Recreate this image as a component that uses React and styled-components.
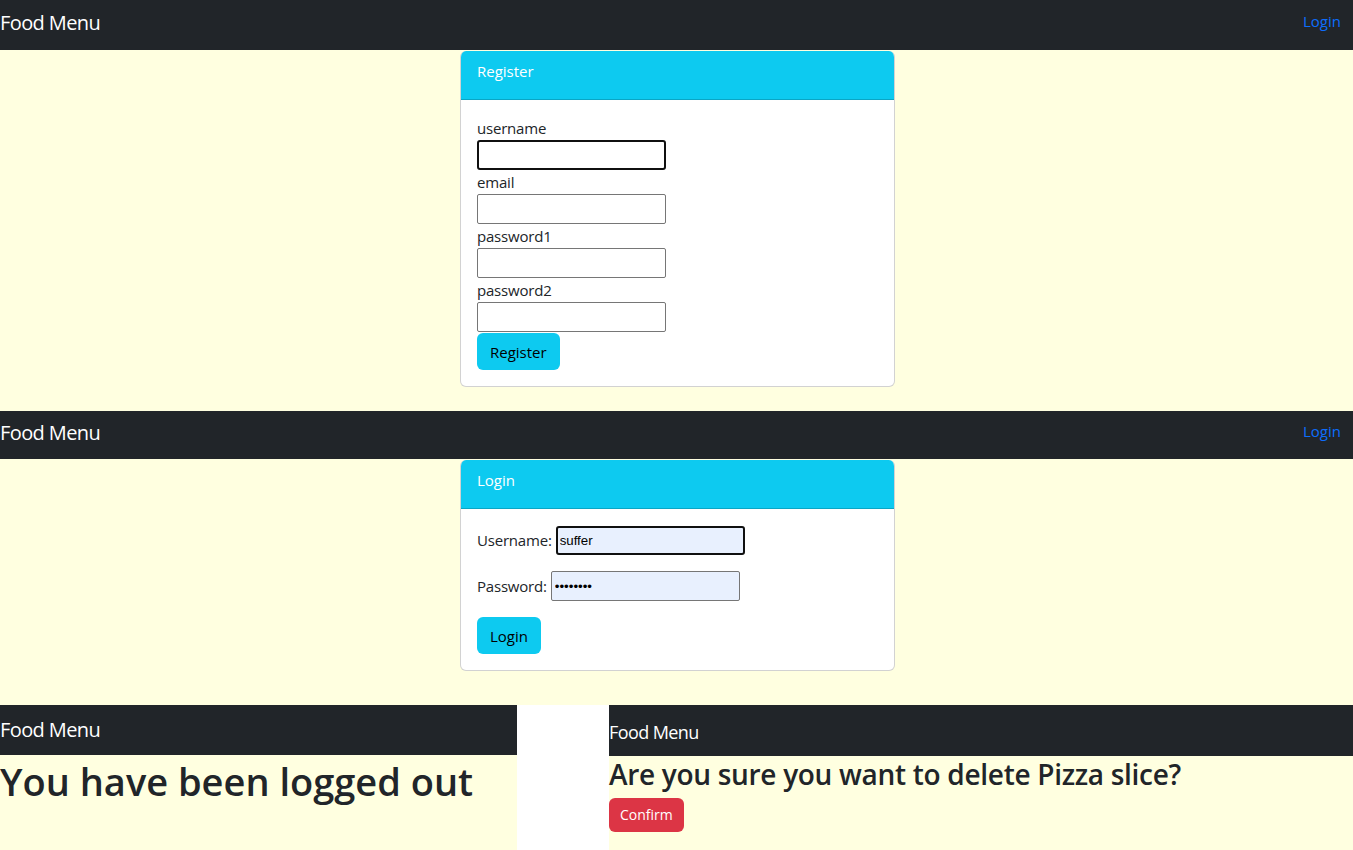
import React from "react";
import styled, { createGlobalStyle } from "styled-components";

const GlobalStyle = createGlobalStyle`
  * { box-sizing: border-box; }
  body {
    margin: 0;
    background: #ffffe0;
    font-family: "Open Sans", "Noto Sans", sans-serif;
    color: #212529;
    font-size: 16px;
  }
`;

const Page = styled.div`
  display: flex;
  flex-direction: column;
  width: 1353px;
  height: 850px;
  overflow: hidden;
`;

const Screen = styled.section`
  display: flex;
  flex-direction: column;
  height: ${(p) => p.h}px;
`;

const Navbar = styled.nav`
  display: flex;
  align-items: center;
  justify-content: space-between;
  height: ${(p) => p.h || 50}px;
  background: #212529;
  padding: 0 12px ${(p) => p.lift || 0}px 0;
  flex-shrink: 0;
`;

const Brand = styled.a`
  color: #fff;
  font-size: ${(p) => p.size || 20}px;
  letter-spacing: -0.6px;
  text-decoration: none;
  margin-top: ${(p) => p.offset || 0}px;
`;

const NavLink = styled.a`
  color: #0d6efd;
  font-size: 15px;
  text-decoration: none;
  margin-bottom: 3px;
`;

const CardWrap = styled.div`
  display: flex;
  justify-content: center;
  padding-left: 2px;
`;

const Card = styled.div`
  width: 435px;
  background: #fff;
  border: 1px solid rgba(0, 0, 0, 0.175);
  border-top: none;
  border-radius: 6px;
  overflow: hidden;
  margin-top: 1px;
`;

const CardHeader = styled.div`
  height: 49px;
  display: flex;
  align-items: center;
  padding: 0 16px 8px;
  background: #0dcaf0;
  color: #fff;
  font-size: 15px;
  border-bottom: 1px solid rgba(0, 0, 0, 0.175);
`;

const CardBody = styled.div`
  padding: 16px;
`;

const Label = styled.label`
  display: block;
  font-size: 15px;
  line-height: 24px;
  letter-spacing: -0.2px;
`;

const InlineLabel = styled.label`
  font-size: 15px;
  letter-spacing: -0.2px;
  margin-right: 4px;
`;

const Input = styled.input`
  display: block;
  width: 189px;
  height: 30px;
  margin: 0;
  border: ${(p) => (p.focused ? "2px solid #101010" : "1px solid #767676")};
  border-radius: ${(p) => (p.focused ? 3 : 2)}px;
  background: ${(p) => (p.filled ? "#e8f0fe" : "#fff")};
  font-family: "Liberation Sans", Arial, sans-serif;
  font-size: 13.3px;
  padding: 1px ${(p) => (p.focused ? 2 : 3)}px;
  outline: none;
  color: #000;
`;

const Row = styled.div`
  display: flex;
  align-items: center;
  height: 30px;
  margin-bottom: 16px;
  ${Input} {
    display: inline-block;
    height: ${(p) => (p.focus ? 29 : 30)}px;
  }
`;

const Button = styled.button`
  display: block;
  align-self: flex-start;
  background: ${(p) => (p.danger ? "#dc3545" : "#0dcaf0")};
  color: ${(p) => (p.danger ? "#fff" : "#000")};
  border: none;
  border-radius: 6px;
  font-family: inherit;
  font-size: ${(p) => (p.small ? 14 : 15)}px;
  height: ${(p) => (p.small ? 34 : 37)}px;
  padding: 0 ${(p) => (p.small ? 11 : 13)}px;
  margin-top: ${(p) => p.mt || 0}px;
  cursor: pointer;
`;

const Split = styled.div`
  display: flex;
  flex: 1;
`;

const Panel = styled.div`
  display: flex;
  flex-direction: column;
  width: ${(p) => (p.w ? `${p.w}px` : "auto")};
  flex: ${(p) => (p.w ? "none" : 1)};
`;

const Gap = styled.div`
  width: 92px;
  background: #fff;
`;

const Heading = styled.h1`
  margin: ${(p) => p.m || "4px 0 0"};
  font-size: ${(p) => p.size}px;
  font-weight: ${(p) => p.weight || 600};
  line-height: 1.2;
  letter-spacing: ${(p) => p.ls || 0}px;
  color: #212529;
`;

export default function App() {
  return (
    <Page>
      <GlobalStyle />
      <Screen h={411}>
        <Navbar lift={5}>
          <Brand href="#">Food Menu</Brand>
          <NavLink href="#">Login</NavLink>
        </Navbar>
        <CardWrap>
          <Card>
            <CardHeader>Register</CardHeader>
            <CardBody>
              <Label>username</Label>
              <Input focused defaultValue="" />
              <Label>email</Label>
              <Input />
              <Label>password1</Label>
              <Input type="password" />
              <Label>password2</Label>
              <Input type="password" />
              <Button mt={1}>Register</Button>
            </CardBody>
          </Card>
        </CardWrap>
      </Screen>

      <Screen h={294}>
        <Navbar h={48} lift={5}>
          <Brand href="#">Food Menu</Brand>
          <NavLink href="#">Login</NavLink>
        </Navbar>
        <CardWrap>
          <Card>
            <CardHeader>Login</CardHeader>
            <CardBody>
              <Row focus>
                <InlineLabel>Username:</InlineLabel>
                <Input focused filled defaultValue="suffer" />
              </Row>
              <Row>
                <InlineLabel>Password:</InlineLabel>
                <Input filled type="password" defaultValue="password" />
              </Row>
              <Button>Login</Button>
            </CardBody>
          </Card>
        </CardWrap>
      </Screen>

      <Split>
        <Panel w={517}>
          <Navbar lift={2}>
            <Brand href="#">Food Menu</Brand>
          </Navbar>
          <Heading size={38} ls={0}>You have been logged out</Heading>
        </Panel>
        <Gap />
        <Panel>
          <Navbar h={51} lift={1}>
            <Brand href="#" size={18} offset={4}>
              Food Menu
            </Brand>
          </Navbar>
          <Heading size={28} weight={600} ls={-0.3} m="2px 0 6px">
            Are you sure you want to delete Pizza slice?
          </Heading>
          <Button danger small>
            Confirm
          </Button>
        </Panel>
      </Split>
    </Page>
  );
}
